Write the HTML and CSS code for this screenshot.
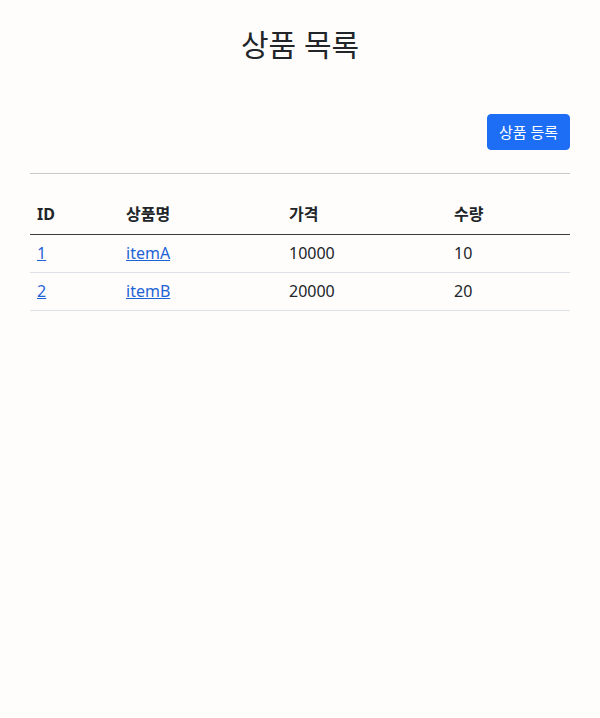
FILE: index.html
```html
<!DOCTYPE html>
<html lang="ko">
<head>
<meta charset="utf-8">
<title>상품 목록</title>
<link rel="stylesheet" href="styles.css">
</head>
<body>
<div class="container">
  <div class="page-header">
    <h2>상품 목록</h2>
  </div>
  <div class="actions">
    <button class="btn-primary" type="button">상품 등록</button>
  </div>
  <hr class="divider">
  <table class="table">
    <thead>
      <tr>
        <th class="col-id">ID</th>
        <th class="col-name">상품명</th>
        <th class="col-price">가격</th>
        <th class="col-qty">수량</th>
      </tr>
    </thead>
    <tbody>
      <tr>
        <td><a href="#">1</a></td>
        <td><a href="#">itemA</a></td>
        <td>10000</td>
        <td>10</td>
      </tr>
      <tr>
        <td><a href="#">2</a></td>
        <td><a href="#">itemB</a></td>
        <td>20000</td>
        <td>20</td>
      </tr>
    </tbody>
  </table>
</div>
</body>
</html>
```

FILE: styles.css
```css
html, body {
  margin: 0;
  padding: 0;
  background: #fefdfb;
}

body {
  font-family: "Noto Sans", "Noto Sans CJK KR", sans-serif;
  font-size: 16px;
  line-height: 24px;
  color: #212529;
}

.container {
  width: 540px;
  margin: 0 auto;
}

.page-header {
  padding-top: 26px;
  text-align: center;
}

.page-header h2 {
  margin: 0;
  font-size: 30px;
  line-height: 38px;
  font-weight: 400;
  color: #212529;
}

.actions {
  display: flex;
  justify-content: flex-end;
  margin-top: 50px;
}

.btn-primary {
  font-family: inherit;
  font-size: 15px;
  line-height: 24px;
  padding: 6px 11px;
  color: #ffffff;
  background: #1d6ef5;
  border: 1px solid #1d6ef5;
  border-radius: 4px;
  height: 36px;
  display: flex;
  align-items: center;
}

.divider {
  margin: 23px 0 0;
  border: 0;
  border-top: 1px solid #c9cacb;
  height: 0;
}

.table {
  width: 100%;
  margin-top: 21px;
  border-collapse: collapse;
}

.table th, .table td {
  text-align: left;
  padding: 6px 7px 7px;
}

.table th {
  font-weight: 700;
  padding-top: 7px;
  padding-bottom: 8px;
  border-bottom: 1px solid #3a3d40;
}

.table td {
  border-bottom: 1px solid #dee2e6;
}

.col-id { width: 75px; }
.col-name { width: 149px; }
.col-price { width: 151px; }
.col-qty { width: 109px; }

.table a {
  color: #1e63d6;
  text-decoration: underline;
}
```
